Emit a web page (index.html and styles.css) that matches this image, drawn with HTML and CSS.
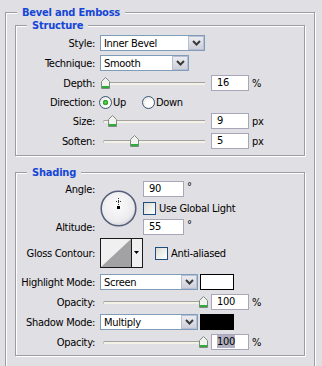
FILE: index.html
```html
<!DOCTYPE html>
<html lang="en">
<head>
    <meta charset="UTF-8">
    <title>Bevel and Emboss</title>
    <link rel="stylesheet" href="styles.css">
</head>
<body>
    <fieldset class="group outer">
        <legend>Bevel and Emboss</legend>

        <fieldset class="group inner structure">
            <legend>Structure</legend>
            <div class="row">
                <span class="lbl">Style:</span>
                <div class="select style-w"><span class="val">Inner Bevel</span><span class="btn"><svg width="9" height="6" viewBox="0 0 9 6"><polyline points="1,1 4.5,4.5 8,1" fill="none" stroke="#3a3a3a" stroke-width="2"/></svg></span></div>
            </div>
            <div class="row">
                <span class="lbl">Technique:</span>
                <div class="select tech-w"><span class="val">Smooth</span><span class="btn"><svg width="9" height="6" viewBox="0 0 9 6"><polyline points="1,1 4.5,4.5 8,1" fill="none" stroke="#3a3a3a" stroke-width="2"/></svg></span></div>
            </div>
            <div class="row">
                <span class="lbl">Depth:</span>
                <div class="slider"><div class="track"></div><svg class="thumb" style="left: 1px" width="9" height="12" viewBox="0 0 9 12"><path d="M0.5 4.5 L4.5 0.5 L8.5 4.5 V11.5 H0.5 Z" fill="#f2f2ee" stroke="#7d8a82"/><rect x="1" y="9" width="7" height="2" fill="#2eac3a"/></svg></div>
                <span class="num">16</span><span class="unit">%</span>
            </div>
            <div class="row dir">
                <span class="lbl">Direction:</span>
                <span class="opt"><span class="radio on"></span>Up</span>
                <span class="opt"><span class="radio"></span>Down</span>
            </div>
            <div class="row">
                <span class="lbl">Size:</span>
                <div class="slider"><div class="track"></div><svg class="thumb" style="left: 8px" width="9" height="12" viewBox="0 0 9 12"><path d="M0.5 4.5 L4.5 0.5 L8.5 4.5 V11.5 H0.5 Z" fill="#f2f2ee" stroke="#7d8a82"/><rect x="1" y="9" width="7" height="2" fill="#2eac3a"/></svg></div>
                <span class="num">9</span><span class="unit">px</span>
            </div>
            <div class="row">
                <span class="lbl">Soften:</span>
                <div class="slider"><div class="track"></div><svg class="thumb" style="left: 30px" width="9" height="12" viewBox="0 0 9 12"><path d="M0.5 4.5 L4.5 0.5 L8.5 4.5 V11.5 H0.5 Z" fill="#f2f2ee" stroke="#7d8a82"/><rect x="1" y="9" width="7" height="2" fill="#2eac3a"/></svg></div>
                <span class="num">5</span><span class="unit">px</span>
            </div>
        </fieldset>

        <fieldset class="group inner shading">
            <legend>Shading</legend>
            <div class="angle">
                <span class="lbl a1">Angle:</span>
                <svg class="dial" width="37" height="37" viewBox="0 0 37 37">
                    <defs>
                        <radialGradient id="dialfill" cx="0.45" cy="0.4" r="0.6">
                            <stop offset="0" stop-color="#fbfbfb"/>
                            <stop offset="0.8" stop-color="#ececef"/>
                            <stop offset="1" stop-color="#d6d6dc"/>
                        </radialGradient>
                    </defs>
                    <circle cx="18.5" cy="18.5" r="17.3" fill="url(#dialfill)" stroke="#56607a" stroke-width="1.6"/>
                    <line x1="18.5" y1="8" x2="18.5" y2="15" stroke="#333" stroke-width="1" stroke-dasharray="1 1"/>
                    <line x1="16" y1="11.5" x2="21" y2="11.5" stroke="#333" stroke-width="1" stroke-dasharray="1 1"/>
                    <rect x="17" y="16" width="3" height="3" fill="#000"/>
                </svg>
                <span class="ctl c1"><span class="num wide">90</span><span class="deg">°</span></span>
                <span class="ctl c2"><span class="check"></span>Use Global Light</span>
                <span class="lbl a3">Altitude:</span>
                <span class="ctl c3"><span class="num wide">55</span><span class="deg">°</span></span>
            </div>
            <div class="row contour">
                <span class="lbl">Gloss Contour:</span>
                <svg class="curve" width="43" height="30" viewBox="0 0 43 30">
                    <rect x="0.5" y="0.5" width="42" height="29" fill="#f0f0f0" stroke="#1a1a1a"/>
                    <polygon points="1,29 31,1 31,29" fill="#a2a2a4"/>
                    <line x1="31.5" y1="1" x2="31.5" y2="29" stroke="#1a1a1a"/>
                    <polygon points="34,13 39,13 36.5,16" fill="#000"/>
                </svg>
                <span class="check aa"></span><span>Anti-aliased</span>
            </div>
            <div class="row mode">
                <span class="lbl">Highlight Mode:</span>
                <div class="select mode-w"><span class="val">Screen</span><span class="btn"><svg width="9" height="6" viewBox="0 0 9 6"><polyline points="1,1 4.5,4.5 8,1" fill="none" stroke="#3a3a3a" stroke-width="2"/></svg></span></div>
                <span class="swatch white"></span>
            </div>
            <div class="row">
                <span class="lbl">Opacity:</span>
                <div class="slider"><div class="track"></div><svg class="thumb" style="left: 99px" width="9" height="12" viewBox="0 0 9 12"><path d="M0.5 4.5 L4.5 0.5 L8.5 4.5 V11.5 H0.5 Z" fill="#f2f2ee" stroke="#7d8a82"/><rect x="1" y="9" width="7" height="2" fill="#2eac3a"/></svg></div>
                <span class="num">100</span><span class="unit">%</span>
            </div>
            <div class="row">
                <span class="lbl">Shadow Mode:</span>
                <div class="select mode-w"><span class="val">Multiply</span><span class="btn"><svg width="9" height="6" viewBox="0 0 9 6"><polyline points="1,1 4.5,4.5 8,1" fill="none" stroke="#3a3a3a" stroke-width="2"/></svg></span></div>
                <span class="swatch black"></span>
            </div>
            <div class="row">
                <span class="lbl">Opacity:</span>
                <div class="slider"><div class="track"></div><svg class="thumb" style="left: 99px" width="9" height="12" viewBox="0 0 9 12"><path d="M0.5 4.5 L4.5 0.5 L8.5 4.5 V11.5 H0.5 Z" fill="#f2f2ee" stroke="#7d8a82"/><rect x="1" y="9" width="7" height="2" fill="#2eac3a"/></svg></div>
                <span class="num"><span class="sel">100</span></span><span class="unit">%</span>
            </div>
        </fieldset>
    </fieldset>
</body>
</html>
```

FILE: styles.css
```css
html, body {
    overflow: hidden;
}
body {
    margin: 0;
    height: 366px;
    background: #e0dfe3;
    font-family: "DejaVu Sans Condensed", "DejaVu Sans", sans-serif;
    font-size: 11px;
    letter-spacing: -0.3px;
    color: #000;
}
.group {
    margin: 0;
    padding: 0;
    min-width: 0;
    border: 1px solid #9d9da1;
    box-shadow: inset 1px 1px #fff, 1px 1px #fff;
}
.group legend {
    padding: 0 5px;
    font-weight: bold;
    letter-spacing: -0.2px;
    line-height: 13px;
    color: #1446d8;
    background: #e0dfe3;
}
.outer {
    box-sizing: border-box;
    margin: 6px 7px 0 5px;
    padding: 0 9px;
    height: 360px;
    border-bottom: none;
}
.outer > legend {
    margin-left: 2px;
}
.inner > legend {
    margin-left: 11px;
}
.structure {
    padding-bottom: 6px;
}
.shading {
    margin-top: 10px;
    padding-bottom: 5px;
}
.row {
    display: flex;
    align-items: center;
    height: 16px;
    margin-top: 4px;
}
legend + .row {
    margin-top: 3px;
}
.lbl {
    flex: none;
    width: 79px;
    margin-right: 5px;
    text-align: right;
}
.select {
    display: flex;
    align-items: center;
    flex: none;
    box-sizing: border-box;
    height: 16px;
    padding-left: 3px;
    border: 1px solid #7f9db9;
    background: #fff;
}
.select .val {
    flex: 1;
}
.select .btn {
    display: flex;
    align-items: center;
    justify-content: center;
    box-sizing: border-box;
    width: 16px;
    height: 14px;
    border: 1px solid #b8bfd3;
    background: linear-gradient(#ebebf1, #cfcfd9);
}
.style-w { width: 105px; }
.tech-w { width: 89px; }
.mode-w { width: 98px; }
.slider {
    position: relative;
    flex: none;
    box-sizing: border-box;
    width: 105px;
    height: 16px;
    padding: 7px 0 0 3px;
}
.track {
    height: 2px;
    border-top: 1px solid #a3a3a3;
    border-left: 1px solid #b9b9b9;
    border-radius: 2px 0 0 2px;
    background: #f4f2e6;
}
.thumb {
    position: absolute;
    top: 2px;
}
.num {
    flex: none;
    box-sizing: border-box;
    width: 38px;
    height: 16px;
    margin-left: 6px;
    padding-left: 5px;
    border: 1px solid #a7a7b9;
    background: #fff;
    line-height: 14px;
}
.num.wide {
    width: 41px;
    margin-left: 0;
}
.sel {
    background: #b0b0c2;
}
.unit {
    margin-left: 3px;
}
.dir {
    height: 14px;
}
.opt {
    display: flex;
    align-items: center;
    width: 44px;
    margin-left: -1px;
}
.radio {
    box-sizing: border-box;
    width: 13px;
    height: 13px;
    margin-right: 1px;
    border: 1px solid #3a5575;
    border-radius: 50%;
    background: radial-gradient(circle at 60% 60%, #fff 30%, #dcdcd6);
}
.radio.on {
    background: radial-gradient(circle, #5ed65e 0, #21a121 2.5px, transparent 3px), radial-gradient(circle at 60% 60%, #fff 30%, #dcdcd6);
}
.check {
    flex: none;
    box-sizing: border-box;
    width: 13px;
    height: 13px;
    margin-right: 3px;
    border: 1px solid #1c4f80;
    background: linear-gradient(135deg, #dcdcd6, #fff);
}
.angle {
    display: grid;
    grid-template-columns: 79px 37px auto;
    grid-template-rows: 16px 14px 16px;
    column-gap: 5px;
    row-gap: 4px;
    align-items: center;
    margin-top: 2px;
}
.a1 { grid-column: 1; grid-row: 1; }
.a3 { grid-column: 1; grid-row: 3; }
.dial {
    grid-column: 2;
    grid-row: 1 / 4;
}
.ctl {
    display: flex;
    align-items: center;
    margin-left: 1px;
    height: 100%;
}
.c1 { grid-column: 3; grid-row: 1; }
.c2 { grid-column: 3; grid-row: 2; }
.c3 { grid-column: 3; grid-row: 3; }
.deg {
    align-self: flex-start;
    margin-left: 3px;
    line-height: 12px;
}
.contour {
    height: 30px;
    margin-top: 3px;
}
.check.aa {
    margin-left: 12px;
}
.mode {
    margin-top: 6px;
}
.swatch {
    flex: none;
    box-sizing: border-box;
    width: 34px;
    height: 16px;
    margin-left: 2px;
    border: 1px solid #000;
}
.swatch.white { background: #fff; }
.swatch.black { background: #000; }
```
